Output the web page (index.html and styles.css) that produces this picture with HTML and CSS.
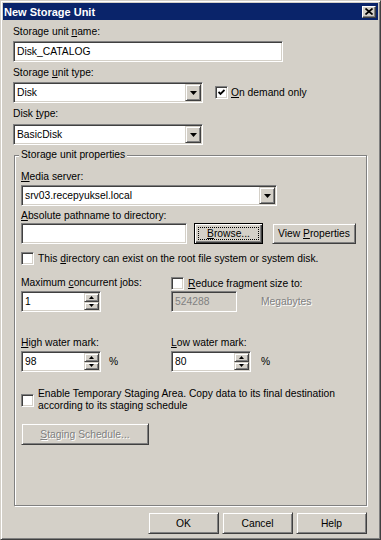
FILE: index.html
```html
<!DOCTYPE html>
<html lang="en">

<head>
	<meta charset="UTF-8" />
	<title>New Storage Unit</title>
	<link rel="stylesheet" href="styles.css">
</head>

<body>
	<div class="window">
		<div class="titlebar">
			<span class="title">New Storage Unit</span>
			<span class="close-btn">
				<svg width="8" height="7" viewBox="0 0 8 7"><path d="M0.5 0.5L7.5 6.5M7.5 0.5L0.5 6.5" stroke="#000" stroke-width="1.7" /></svg>
			</span>
		</div>

		<div class="dialog">
			<div class="label name-label">Storage unit <u>n</u>ame:</div>
			<div class="field name-field"><span class="value">Disk_CATALOG</span></div>

			<div class="label type-label">Storage <u>u</u>nit type:</div>
			<div class="row">
				<div class="field combo type-combo">
					<span class="value">Disk</span>
					<span class="drop"><svg width="7" height="4" viewBox="0 0 7 4"><path d="M0 0H7L3.5 4Z" /></svg></span>
				</div>
				<div class="check demand-check">
					<span class="box"><svg width="7" height="7" viewBox="0 0 7 7"><path d="M0.5 3L2.5 5L6.5 1" fill="none" stroke="#000" stroke-width="1.8" /></svg></span>
					<span><u>O</u>n demand only</span>
				</div>
			</div>

			<div class="label disk-label">Disk <u>t</u>ype:</div>
			<div class="field combo type-combo">
				<span class="value">BasicDisk</span>
				<span class="drop"><svg width="7" height="4" viewBox="0 0 7 4"><path d="M0 0H7L3.5 4Z" /></svg></span>
			</div>

			<div class="group">
				<span class="group-title">Storage unit properties</span>

				<div class="label media-label"><u>M</u>edia server:</div>
				<div class="field combo media-combo">
					<span class="value">srv03.recepyuksel.local</span>
					<span class="drop"><svg width="7" height="4" viewBox="0 0 7 4"><path d="M0 0H7L3.5 4Z" /></svg></span>
				</div>

				<div class="label path-label"><u>A</u>bsolute pathname to directory:</div>
				<div class="row">
					<div class="field path-field"></div>
					<div class="btn btn-default browse-btn"><span class="focus-rect"><span><u>B</u>rowse...</span></span></div>
					<div class="btn props-btn"><span>View <u>P</u>roperties</span></div>
				</div>

				<div class="check root-check">
					<span class="box"></span>
					<span>This <u>d</u>irectory can exist on the root file system or system disk.</span>
				</div>

				<div class="cols jobs-row">
					<div class="col">
						<div class="label">Maximum <u>c</u>oncurrent jobs:</div>
						<div class="field spin">
							<span class="value">1</span>
							<span class="spin-btns">
								<span class="spin-btn"><svg width="5" height="3" viewBox="0 0 5 3"><path d="M0 3H5L2.5 0Z" /></svg></span>
								<span class="spin-btn"><svg width="5" height="3" viewBox="0 0 5 3"><path d="M0 0H5L2.5 3Z" /></svg></span>
							</span>
						</div>
					</div>
					<div class="col">
						<div class="check reduce-check">
							<span class="box"></span>
							<span><u>R</u>educe fragment size to:</span>
						</div>
						<div class="row">
							<div class="field disabled frag-field"><span class="value">524288</span></div>
							<span class="unit disabled-text">Megabytes</span>
						</div>
					</div>
				</div>

				<div class="cols water-row">
					<div class="col">
						<div class="label"><u>H</u>igh water mark:</div>
						<div class="row">
							<div class="field spin">
								<span class="value">98</span>
								<span class="spin-btns">
									<span class="spin-btn"><svg width="5" height="3" viewBox="0 0 5 3"><path d="M0 3H5L2.5 0Z" /></svg></span>
									<span class="spin-btn"><svg width="5" height="3" viewBox="0 0 5 3"><path d="M0 0H5L2.5 3Z" /></svg></span>
								</span>
							</div>
							<span class="pct">%</span>
						</div>
					</div>
					<div class="col">
						<div class="label"><u>L</u>ow water mark:</div>
						<div class="row">
							<div class="field spin">
								<span class="value">80</span>
								<span class="spin-btns">
									<span class="spin-btn"><svg width="5" height="3" viewBox="0 0 5 3"><path d="M0 3H5L2.5 0Z" /></svg></span>
									<span class="spin-btn"><svg width="5" height="3" viewBox="0 0 5 3"><path d="M0 0H5L2.5 3Z" /></svg></span>
								</span>
							</div>
							<span class="pct pct-low">%</span>
						</div>
					</div>
				</div>

				<div class="check staging-check">
					<span class="box"></span>
					<span>Enable Temporary Staging Area. Copy data to its final destination<br />according to its staging schedule</span>
				</div>

				<div class="btn disabled-text staging-btn"><span><u>S</u>taging Schedule...</span></div>
			</div>

			<div class="footer">
				<div class="btn footer-btn">OK</div>
				<div class="btn footer-btn">Cancel</div>
				<div class="btn footer-btn">Help</div>
			</div>
		</div>
	</div>
</body>

</html>
```

FILE: styles.css
```css
html,
body {
	margin: 0;
	height: 100%;
}

body {
	font-family: "Liberation Sans", Arial, sans-serif;
	font-size: 10.3px;
	color: #000;
	background: #d4d0c8;
	overflow: hidden;
}

u {
	text-decoration: underline;
	text-underline-offset: 1px;
}

.window {
	box-sizing: border-box;
	width: 381px;
	height: 540px;
	padding: 2px;
	border: 1px solid;
	border-color: #d4d0c8 #404040 #404040 #d4d0c8;
	box-shadow: inset 1px 1px 0 #fff, inset -1px -1px 0 #808080;
	display: flex;
	flex-direction: column;
}

.titlebar {
	height: 17px;
	background: #0a246a;
	color: #fff;
	display: flex;
	align-items: center;
	justify-content: space-between;
	padding: 0 2px 0 1px;
}

.title {
	font-size: 11px;
	font-weight: bold;
}

.close-btn {
	box-sizing: border-box;
	width: 14px;
	height: 12px;
	background: #d4d0c8;
	border: 1px solid;
	border-color: #fff #404040 #404040 #fff;
	box-shadow: inset -1px -1px 0 #808080;
	display: flex;
	align-items: center;
	justify-content: center;
}

.dialog {
	flex: 1;
	display: flex;
	flex-direction: column;
	padding: 6px 11px 3px 10px;
}

.label {
	line-height: 12px;
	margin-bottom: 3px;
}

.type-label {
	margin-top: 5px;
}

.disk-label {
	margin-top: 5px;
	margin-bottom: 4px;
}

.row {
	display: flex;
	align-items: center;
}

/* sunken edit / combo boxes */
.field {
	box-sizing: border-box;
	height: 21px;
	padding: 1px;
	background: #fff;
	border: 1px solid;
	border-color: #808080 #fff #fff #808080;
	box-shadow: inset 1px 1px 0 #404040, inset -1px -1px 0 #d4d0c8;
	display: flex;
	align-items: stretch;
}

.field .value {
	flex: 1;
	padding-left: 2px;
	line-height: 17px;
	white-space: nowrap;
	overflow: hidden;
}

.field.disabled {
	background: #d4d0c8;
	color: #808080;
}

.name-field {
	width: 270px;
}

.type-combo {
	width: 190px;
}

.media-combo {
	width: 256px;
}

.path-field {
	width: 166px;
}

.frag-field {
	width: 66px;
}

.spin {
	width: 80px;
}

.drop,
.spin-btn,
.btn {
	box-sizing: border-box;
	background: #d4d0c8;
	border: 1px solid;
	border-color: #d4d0c8 #404040 #404040 #d4d0c8;
	box-shadow: inset 1px 1px 0 #fff, inset -1px -1px 0 #808080;
}

.drop {
	width: 16px;
	display: flex;
	align-items: center;
	justify-content: center;
}

.spin-btns {
	width: 15px;
	display: flex;
	flex-direction: column;
}

.spin-btn {
	flex: 1;
	display: flex;
	align-items: center;
	justify-content: center;
}

.btn {
	height: 22px;
	display: flex;
	align-items: center;
	justify-content: center;
	white-space: nowrap;
}

.btn-default {
	border-color: #000;
	box-shadow: inset 1px 1px 0 #fff, inset -1px -1px 0 #404040, inset -2px -2px 0 #808080;
}

.focus-rect {
	box-sizing: border-box;
	width: calc(100% - 6px);
	height: calc(100% - 6px);
	border: 1px dotted #000;
	display: flex;
	align-items: center;
	justify-content: center;
}

.disabled-text {
	color: #808080;
	text-shadow: 1px 1px 0 #fff;
}

.browse-btn {
	width: 69px;
	height: 21px;
	margin-left: 7px;
}

.props-btn {
	width: 84px;
	height: 21px;
	margin-left: 9px;
}

/* checkboxes */
.check {
	display: flex;
	align-items: center;
	gap: 4px;
	line-height: 12px;
}

.box {
	box-sizing: border-box;
	width: 13px;
	height: 13px;
	flex: none;
	background: #fff;
	border: 1px solid;
	border-color: #808080 #fff #fff #808080;
	box-shadow: inset 1px 1px 0 #404040, inset -1px -1px 0 #d4d0c8;
	display: flex;
	align-items: center;
	justify-content: center;
}

.demand-check {
	margin-left: 12px;
	gap: 3px;
}

/* group box */
.group {
	position: relative;
	flex: 1;
	margin: 10px 0 0 1px;
	padding: 15px 6px 0;
	border: 1px solid #808080;
	box-shadow: inset 1px 1px 0 #fff, 1px 1px 0 #fff;
}

.group-title {
	position: absolute;
	top: -7px;
	left: 4px;
	padding: 0 2px;
	line-height: 12px;
	background: #d4d0c8;
}

.media-label {
	margin-bottom: 2px;
}

.path-label {
	margin-top: 4px;
	margin-bottom: 1px;
}

.root-check {
	margin-top: 8px;
}

.cols {
	display: flex;
}

.col {
	width: 150px;
}

.jobs-row {
	margin-top: 12px;
}

.jobs-row .label {
	margin-bottom: 2px;
}

.reduce-check {
	margin-bottom: 1px;
}

.unit {
	margin-left: 24px;
}

.water-row {
	margin-top: 25px;
}

.water-row .label {
	margin-bottom: 2px;
}

.pct {
	margin-left: 8px;
}

.pct-low {
	margin-left: 10px;
}

.staging-check {
	margin-top: 16px;
}

.staging-btn {
	width: 128px;
	margin-top: 11px;
}

.footer {
	display: flex;
	justify-content: flex-end;
	gap: 3px;
	margin-top: 6px;
}

.footer-btn {
	width: 71px;
}
```
